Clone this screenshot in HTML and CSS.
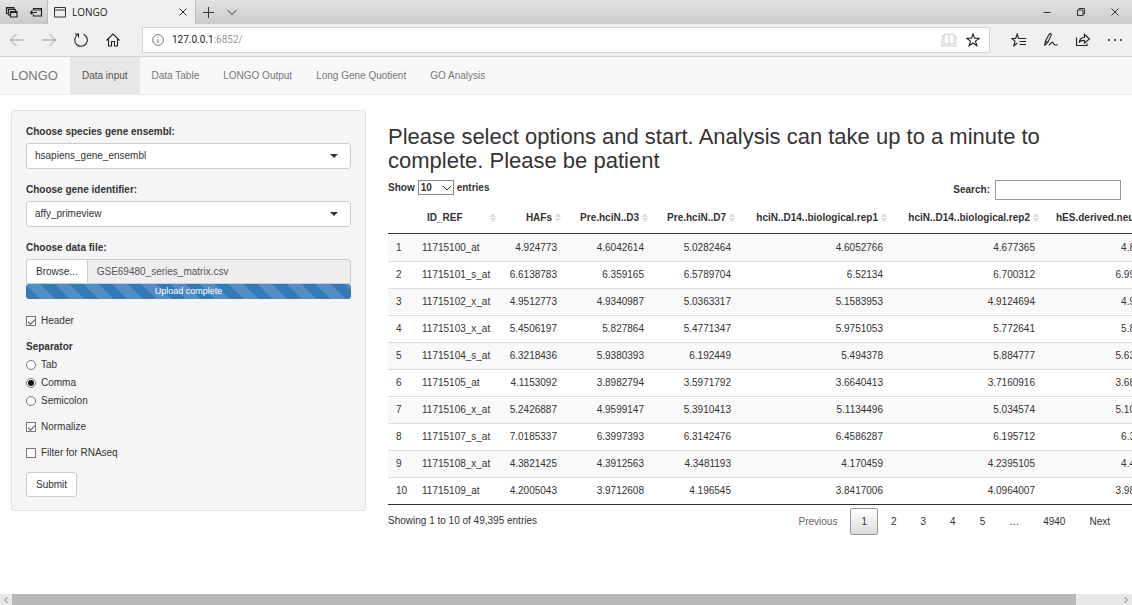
FILE: index.html
```
<!DOCTYPE html>
<html lang="en">
<head>
<meta charset="utf-8">
<title>LONGO</title>
<link rel="stylesheet" href="styles.css">
</head>
<body>
<header class="browser">
  <div class="tabstrip">
    <div class="tab-tools">
      <button class="icon-btn heavy" aria-label="Tabs set aside"><svg width="14" height="14" viewBox="0 0 14 14"><path d="M3 8.500H1.500V2.500H9V4M5 10H3.500V4.500H10.500V6M5.500 6.500H12V12H5.500ZM5.500 7.500H12M1.500 3H9"/></svg></button>
      <button class="icon-btn heavy" aria-label="Set tabs aside"><svg width="14" height="14" viewBox="0 0 14 14"><path d="M4.500 5V3.500H12.500V11H4.500V9.500M4.500 5H12.500M1.500 7.500H8M3.500 5.500L1.500 7.500L3.500 9.500"/></svg></button>
    </div>
    <div class="tab">
      <svg width="14" height="14" viewBox="0 0 14 14"><path d="M1.500 2.500H12.500V12H1.500ZM1.500 5H12.500"/></svg>
      <span class="tab-title">LONGO</span>
      <button class="icon-btn" aria-label="Close tab"><svg width="10" height="10" viewBox="0 0 10 10"><path d="M1.500 1.500L8.500 8.500M8.500 1.500L1.500 8.500"/></svg></button>
    </div>
    <div class="tab-more">
      <button class="icon-btn" aria-label="New tab"><svg width="12" height="12" viewBox="0 0 12 12"><path d="M6.500 1V12M1 6.500H12"/></svg></button>
      <button class="icon-btn" aria-label="Show tab previews"><svg width="12" height="12" viewBox="0 0 12 12"><path d="M1.500 4L6 8.500L10.500 4"/></svg></button>
    </div>
    <div class="window-controls">
      <button class="icon-btn" aria-label="Minimize"><svg width="10" height="10" viewBox="0 0 10 10"><path d="M1.500 5.500H8.500"/></svg></button>
      <button class="icon-btn" aria-label="Restore"><svg width="10" height="10" viewBox="0 0 10 10"><path d="M1.500 3H7V8.500H1.500ZM3 3V1.500H8.500V7H7"/></svg></button>
      <button class="icon-btn" aria-label="Close"><svg width="10" height="10" viewBox="0 0 10 10"><path d="M1.500 1.500L8.500 8.500M8.500 1.500L1.500 8.500"/></svg></button>
    </div>
  </div>
  <div class="toolbar">
    <div class="nav-tools">
      <button class="icon-btn faded" aria-label="Back"><svg width="16" height="16" viewBox="0 0 16 16"><path d="M15 8H1.500M7.500 2L1.500 8L7.500 14"/></svg></button>
      <button class="icon-btn faded" aria-label="Forward"><svg width="16" height="16" viewBox="0 0 16 16"><path d="M1 8H14.500M8.500 2L14.500 8L8.500 14"/></svg></button>
      <button class="icon-btn bold" aria-label="Refresh"><svg width="16" height="16" viewBox="0 0 16 16"><path d="M10.500 2.200A6.300 6.300 0 1 1 4.800 2.600M2 2H5.500V5.500"/></svg></button>
      <button class="icon-btn bold" aria-label="Home"><svg width="16" height="16" viewBox="0 0 16 16"><path d="M1.500 8.500L8 2L14.500 8.500M3.500 7V14H6.500V9.500H9.500V14H12.500V7"/></svg></button>
    </div>
    <div class="address">
      <svg class="info-icon" width="12" height="12" viewBox="0 0 12 12"><circle cx="6" cy="6" r="5.300"/><path d="M6 5V9M6 3V4"/></svg>
      <span class="url">127.0.0.1<span class="url-rest">:6852/</span></span>
      <button class="icon-btn pale" aria-label="Reading view"><svg width="16" height="14" viewBox="0 0 16 14"><path d="M8 2V12M8 2Q5 0 3 1.500V11Q6 10 8 12Q10 10 13 11V1.500Q11 0 8 2M3 3H1V13H15V3H13"/></svg></button>
      <button class="icon-btn bold" aria-label="Add to favorites"><svg width="14" height="14" viewBox="0 0 14 14"><path d="M7 0.900L8.500 5.300H13.300L9.500 8.100L10.900 12.800L7 10L3.100 12.800L4.500 8.100L0.700 5.300H5.500Z"/></svg></button>
    </div>
    <div class="page-tools">
      <button class="icon-btn bold" aria-label="Favorites hub"><svg width="16" height="14" viewBox="0 0 16 14"><path d="M9 5.500H7.600L6.200 1L4.700 5.500H0.800L4 8.200L2.800 12.800L6.500 10M8.500 5.500H15M8.500 8.500H15M8.500 11.500H15"/></svg></button>
      <button class="icon-btn bold" aria-label="Web notes"><svg width="16" height="16" viewBox="0 0 16 16"><path d="M1.500 13.500L2.500 9L6 2.500Q8 0.500 8.300 3L4.800 10.500L1.500 13.500M2.500 9L4.800 10.500M6 13.500Q9.500 8.500 10.500 11.500Q11.500 14 14.500 12.500"/></svg></button>
      <button class="icon-btn bold" aria-label="Share"><svg width="16" height="16" viewBox="0 0 16 16"><path d="M1.500 5.500V13.500H12V11.500M4 10.500Q5 5.500 9.500 5.500V2.500L14.500 7L9.500 11V8.500Q6 8 4 10.500Z"/></svg></button>
      <button class="icon-btn dots" aria-label="More"><svg width="16" height="4" viewBox="0 0 16 4"><circle cx="2" cy="2" r="1"/><circle cx="8" cy="2" r="1"/><circle cx="14" cy="2" r="1"/></svg></button>
    </div>
  </div>
</header>

<nav class="navbar">
  <a class="brand" href="#">LONGO</a>
  <a class="nav-link active" href="#">Data input</a>
  <a class="nav-link" href="#">Data Table</a>
  <a class="nav-link" href="#">LONGO Output</a>
  <a class="nav-link" href="#">Long Gene Quotient</a>
  <a class="nav-link" href="#">GO Analysis</a>
</nav>

<main class="page">
  <form class="sidebar">
    <div class="field">
      <label class="field-label" for="species">Choose species gene ensembl:</label>
      <div class="select-wrap"><select class="control" id="species"><option>hsapiens_gene_ensembl</option></select></div>
    </div>
    <div class="field">
      <label class="field-label" for="ident">Choose gene identifier:</label>
      <div class="select-wrap"><select class="control" id="ident"><option>affy_primeview</option></select></div>
    </div>
    <div class="field file-field">
      <label class="field-label" for="file">Choose data file:</label>
      <div class="file-row">
        <button class="browse" type="button">Browse...</button>
        <input class="file-name" id="file" type="text" readonly value="GSE69480_series_matrix.csv">
      </div>
      <div class="progress">Upload complete</div>
    </div>
    <label class="check"><input type="checkbox" checked>Header</label>
    <fieldset class="radios">
      <legend class="field-label">Separator</legend>
      <label class="check"><input type="radio" name="sep">Tab</label>
      <label class="check"><input type="radio" name="sep" checked>Comma</label>
      <label class="check"><input type="radio" name="sep">Semicolon</label>
    </fieldset>
    <label class="check spaced"><input type="checkbox" checked>Normalize</label>
    <label class="check spaced"><input type="checkbox">Filter for RNAseq</label>
    <button class="submit" type="button">Submit</button>
  </form>

  <section class="content">
    <h2 class="headline">Please select options and start. Analysis can take up to a minute to complete. Please be patient</h2>
    <div class="table-tools">
      <label class="length">Show <span class="length-wrap"><select class="length-select"><option>10</option></select><svg class="chevron" width="10" height="6" viewBox="0 0 10 6"><path d="M1 1L5 5L9 1"/></svg></span> entries</label>
      <label class="search">Search:<input class="search-box" type="search"></label>
    </div>
    <div class="table-wrap">
      <table class="data">
        <colgroup><col class="c-index"><col class="c-id"><col class="c-hafs"><col class="c-pre"><col class="c-pre"><col class="c-rep"><col class="c-rep"><col class="c-last"></colgroup>
        <thead>
          <tr><th></th><th class="sort left">ID_REF</th><th class="sort">HAFs</th><th class="sort">Pre.hciN..D3</th><th class="sort">Pre.hciN..D7</th><th class="sort">hciN..D14..biological.rep1</th><th class="sort">hciN..D14..biological.rep2</th><th class="left">hES.derived.neu</th></tr>
        </thead>
        <tbody>
          <tr><td>1</td><td>11715100_at</td><td>4.924773</td><td>4.6042614</td><td>5.0282464</td><td>4.6052766</td><td>4.677365</td><td>4.8</td></tr>
          <tr><td>2</td><td>11715101_s_at</td><td>6.6138783</td><td>6.359165</td><td>6.5789704</td><td>6.52134</td><td>6.700312</td><td>6.99</td></tr>
          <tr><td>3</td><td>11715102_x_at</td><td>4.9512773</td><td>4.9340987</td><td>5.0363317</td><td>5.1583953</td><td>4.9124694</td><td>4.9</td></tr>
          <tr><td>4</td><td>11715103_x_at</td><td>5.4506197</td><td>5.827864</td><td>5.4771347</td><td>5.9751053</td><td>5.772641</td><td>5.8</td></tr>
          <tr><td>5</td><td>11715104_s_at</td><td>6.3218436</td><td>5.9380393</td><td>6.192449</td><td>5.494378</td><td>5.884777</td><td>5.63</td></tr>
          <tr><td>6</td><td>11715105_at</td><td>4.1153092</td><td>3.8982794</td><td>3.5971792</td><td>3.6640413</td><td>3.7160916</td><td>3.68</td></tr>
          <tr><td>7</td><td>11715106_x_at</td><td>5.2426887</td><td>4.9599147</td><td>5.3910413</td><td>5.1134496</td><td>5.034574</td><td>5.10</td></tr>
          <tr><td>8</td><td>11715107_s_at</td><td>7.0185337</td><td>6.3997393</td><td>6.3142476</td><td>6.4586287</td><td>6.195712</td><td>6.3</td></tr>
          <tr><td>9</td><td>11715108_x_at</td><td>4.3821425</td><td>4.3912563</td><td>4.3481193</td><td>4.170459</td><td>4.2395105</td><td>4.4</td></tr>
          <tr><td>10</td><td>11715109_at</td><td>4.2005043</td><td>3.9712608</td><td>4.196545</td><td>3.8417006</td><td>4.0964007</td><td>3.98</td></tr>
        </tbody>
      </table>
    </div>
    <div class="table-foot">
      <div class="info">Showing 1 to 10 of 49,395 entries</div>
      <div class="pager">
        <button class="page-btn muted">Previous</button>
        <button class="page-btn current">1</button>
        <button class="page-btn">2</button>
        <button class="page-btn">3</button>
        <button class="page-btn">4</button>
        <button class="page-btn">5</button>
        <span class="page-btn">…</span>
        <button class="page-btn">4940</button>
        <button class="page-btn">Next</button>
      </div>
    </div>
  </section>
</main>

<div class="hscroll">
  <button class="scroll-end" aria-label="Scroll left"><svg width="8" height="8" viewBox="0 0 8 8"><path d="M5.500 1L2.500 4L5.500 7"/></svg></button>
  <div class="scroll-track"><div class="scroll-thumb"></div></div>
  <button class="scroll-end" aria-label="Scroll right"><svg width="8" height="8" viewBox="0 0 8 8"><path d="M2.500 1L5.500 4L2.500 7"/></svg></button>
</div>
</body>
</html>
```
FILE: styles.css
```
* { box-sizing: border-box; }
body {
  margin: 0;
  min-height: 100vh;
  display: flex;
  flex-direction: column;
  overflow: hidden;
  background: #fff;
  color: #333;
  font: 10px/14px "Liberation Sans", Arial, sans-serif;
}
button, input, select { font: inherit; color: inherit; margin: 0; }
svg { display: block; fill: none; stroke: #333; stroke-width: 1; }

/* Browser chrome */
.icon-btn { display: flex; align-items: center; justify-content: center; padding: 0; border: 0; background: none; }
.bold svg { stroke: #222; stroke-width: 1.1; }
.heavy svg { stroke: #222; stroke-width: 1.2; }
.faded svg { stroke: #999; }
.pale svg { stroke: #ccc; }
.info-icon { stroke: #777; }
.dots svg { fill: #222; stroke: none; }
.tabstrip { display: flex; height: 24px; background: linear-gradient(#e2e4e4, #c9cbcb); }
.tab-tools { display: flex; align-items: center; gap: 10px; width: 48px; padding-left: 5px; border-right: 1px solid #bbb; }
.tab { display: flex; align-items: center; gap: 5px; width: 148px; padding: 0 7px 0 5px; background: #f0f0f0; border-right: 1px solid #bbb; }
.tab-title { flex: 1; font: 10px/14px "Open Sans", sans-serif; color: #222; }
.tab-more { display: flex; flex: 1; align-items: center; gap: 12px; padding-left: 6px; }
.window-controls { display: flex; align-items: center; gap: 24px; padding-right: 12px; }
.toolbar { display: flex; align-items: center; height: 33px; background: #f0f0f0; border-bottom: 1px solid #d2d2d2; }
.nav-tools { display: flex; gap: 16px; width: 142px; padding-left: 9px; }
.address { display: flex; flex: 1; align-items: center; height: 26px; padding: 0 9px; background: #fff; border: 1px solid #d6d6d6; }
.url { flex: 1; padding-left: 8px; font: 10px/14px Roboto, sans-serif; color: #222; }
.url-rest { color: #999; }
.address .pale { margin-right: 9px; }
.page-tools { display: flex; gap: 16px; padding: 0 9px 0 21px; }

/* Navigation bar */
.navbar { display: flex; height: 38px; background: #f8f8f8; border-bottom: 1px solid #ececec; }
.brand, .nav-link { padding: 0 12px; color: #777; text-decoration: none; line-height: 37px; }
.brand { padding-left: 11px; font-size: 13px; }
.nav-link.active { background: #e7e7e7; color: #555; }

/* Page */
.page { display: flex; flex: 1; align-items: flex-start; gap: 22px; padding: 15px 0 20px 11px; }
.sidebar { flex: 0 1 355px; padding: 14px 14px 13px; background: #f5f5f5; border: 1px solid #e3e3e3; border-radius: 3px; }
.field { margin-bottom: 14px; }
.file-field { margin-bottom: 15px; }
.field-label { display: block; margin-bottom: 4px; padding: 0; font-weight: bold; }
.select-wrap { position: relative; }
.select-wrap::after { content: ""; position: absolute; right: 13px; top: 11px; border: 4px solid transparent; border-top-color: #333; border-bottom: 0; pointer-events: none; }
.control { display: block; width: 100%; height: 26px; padding: 0 8px; appearance: none; background: #fff; border: 1px solid #ccc; border-radius: 3px; }
.file-row { display: flex; height: 25px; }
.browse { padding: 0 9px; background: #fff; border: 1px solid #ccc; border-right: 0; border-radius: 3px 0 0 0; }
.file-name { flex: 1; min-width: 0; padding: 0 9px; color: #555; background: #eee; border: 1px solid #ccc; border-radius: 0 3px 0 0; }
.progress {
  height: 15px;
  color: #fff;
  font-size: 9px;
  line-height: 15px;
  text-align: center;
  border-radius: 3px;
  background: linear-gradient(45deg, #528ec3 25%, #337ab7 25%, #337ab7 50%, #528ec3 50%, #528ec3 75%, #337ab7 75%) 0 0 / 29px 29px;
}
.check { display: flex; align-items: center; gap: 5px; }
.check input { appearance: none; display: grid; place-content: center; width: 10px; height: 10px; background: #fff; border: 1px solid #777; }
.check input[type="radio"] { border-radius: 50%; }
.check input[type="radio"]:checked::before { content: ""; width: 6px; height: 6px; border-radius: 50%; background: #111; }
.check input[type="checkbox"]:checked::before { content: ""; width: 6px; height: 3px; border: solid #555; border-width: 0 0 1px 1px; transform: rotate(-45deg); }
.radios { display: grid; gap: 4px; margin: 12px 0; padding: 0; border: 0; }
.spaced { margin-bottom: 12px; }
.submit { height: 25px; padding: 0 9px; background: #fff; border: 1px solid #ccc; border-radius: 3px; }

.content { flex: 1; min-width: 0; }
.headline { margin: 15px 60px 7px 0; font-size: 22px; font-weight: normal; line-height: 24px; }
.table-tools { display: flex; align-items: flex-start; justify-content: space-between; height: 23px; padding-right: 11px; font-weight: bold; }
.length { display: flex; align-items: center; gap: 3px; }
.length-wrap { position: relative; }
.length-select { display: block; width: 36px; height: 15px; padding: 0 2px; appearance: none; border: 1px solid #888; border-radius: 0; background: #fff; }
.chevron { position: absolute; right: 2px; top: 5px; pointer-events: none; }
.search { display: flex; align-items: center; gap: 5px; }
.search-box { width: 126px; height: 20px; padding: 0 3px; border: 1px solid #999; background: #fff; appearance: none; }
.table-wrap { overflow: hidden; }
.data { table-layout: fixed; width: 755px; border-collapse: separate; border-spacing: 0; border-bottom: 1px solid #333; }
.c-index { width: 26px; }
.c-id { width: 86px; }
.c-hafs { width: 65px; }
.c-pre { width: 87px; }
.c-rep { width: 152px; }
.c-last { width: 100px; }
.data th { padding: 8px 13px; border-bottom: 1px solid #333; text-align: right; white-space: nowrap; }
.data th.left { text-align: left; }
.data th:last-child { padding-right: 0; }
.sort { position: relative; }
.sort::before, .sort::after { content: ""; position: absolute; right: 4px; border: 3px solid transparent; }
.sort::before { top: 10px; border-top: 0; border-bottom: 4px solid #ddd; }
.sort::after { top: 15px; border-bottom: 0; border-top: 4px solid #ddd; }
.data td { height: 27px; padding: 0 8px; border-top: 1px solid #ddd; text-align: right; white-space: nowrap; }
.data td:nth-child(-n+2) { text-align: left; }
.data tr:first-child td { border-top-color: #f9f9f9; }
.data tbody tr:nth-child(odd) { background: #f9f9f9; }
.table-foot { display: flex; justify-content: space-between; padding: 3px 11px 0 0; }
.info { padding-top: 6px; }
.pager { display: flex; gap: 2px; }
.page-btn { height: 27px; padding: 0 10px; border: 1px solid transparent; border-radius: 2px; background: none; line-height: 25px; }
.page-btn.muted { color: #666; }
.page-btn.current { border-color: #979797; background: linear-gradient(#fff, #dcdcdc); }

.hscroll { display: flex; height: 11px; background: #e8e8e8; }
.scroll-end { display: grid; place-content: center; width: 12px; padding: 0; border: 0; background: none; }
.scroll-end svg { stroke: #777; }
.scroll-track { flex: 1; }
.scroll-thumb { width: 96%; height: 100%; background: #b8b8b8; }
```
